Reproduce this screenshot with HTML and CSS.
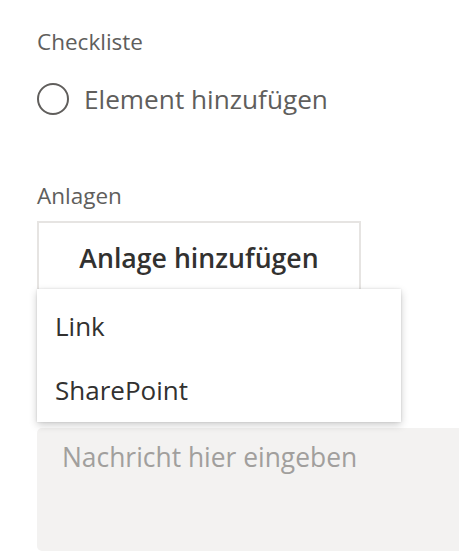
FILE: index.html
```html
<!DOCTYPE html>
<html lang="de">
<head>
<meta charset="utf-8">
<title>Checkliste</title>
<link rel="stylesheet" href="styles.css">
</head>
<body>
<div class="panel">
  <div class="label">Checkliste</div>
  <div class="check-row">
    <span class="circle"></span>
    <span class="check-text">Element hinzufügen</span>
  </div>
  <div class="label label-att">Anlagen</div>
  <div class="attach">
    <button class="attach-btn" type="button">Anlage hinzufügen</button>
    <div class="menu">
      <div class="menu-item">Link</div>
      <div class="menu-item">SharePoint</div>
    </div>
  </div>
  <div class="message">Nachricht hier eingeben</div>
</div>
</body>
</html>
```
FILE: styles.css
```css
html, body {
  margin: 0;
  padding: 0;
  background: #ffffff;
  overflow: hidden;
}
body {
  font-family: "Open Sans", "Noto Sans", sans-serif;
  width: 459px;
  height: 556px;
}
.panel {
  padding: 27px 0 0 37px;
  display: flex;
  flex-direction: column;
  align-items: flex-start;
}
.label {
  font-size: 22.5px;
  line-height: 30px;
  color: #605e5c;
}
.check-row {
  margin-top: 26px;
  display: flex;
  align-items: center;
  gap: 15px;
  height: 32px;
}
.circle {
  width: 32px;
  height: 32px;
  box-sizing: border-box;
  border: 2px solid #605e5c;
  border-radius: 50%;
}
.check-text {
  font-size: 26.2px;
  line-height: 32px;
  color: #605e5c;
}
.label-att {
  margin-top: 66px;
}
.attach {
  position: relative;
  margin-top: 10px;
}
.attach-btn {
  display: block;
  width: 324px;
  height: 72px;
  box-sizing: border-box;
  border: 2px solid #e6e4e2;
  background: #ffffff;
  font-family: "Open Sans", "Noto Sans", sans-serif;
  font-size: 26.7px;
  font-weight: 600;
  color: #323130;
  padding: 0;
}
.menu {
  position: absolute;
  left: 0;
  top: 68px;
  width: 364px;
  box-sizing: border-box;
  padding: 5px 0 0;
  background: #ffffff;
  box-shadow: 0 3px 8px rgba(0, 0, 0, 0.2), 0 0 2px rgba(0, 0, 0, 0.12);
}
.menu-item {
  height: 64px;
  line-height: 64px;
  padding-left: 18px;
  font-size: 26px;
  color: #323130;
}
.message {
  margin-top: 135px;
  width: 440px;
  height: 123px;
  box-sizing: border-box;
  padding: 13px 0 0 25px;
  border-radius: 5px;
  background: #f3f2f1;
  font-size: 26.4px;
  line-height: 32px;
  color: #a19f9d;
}
```
